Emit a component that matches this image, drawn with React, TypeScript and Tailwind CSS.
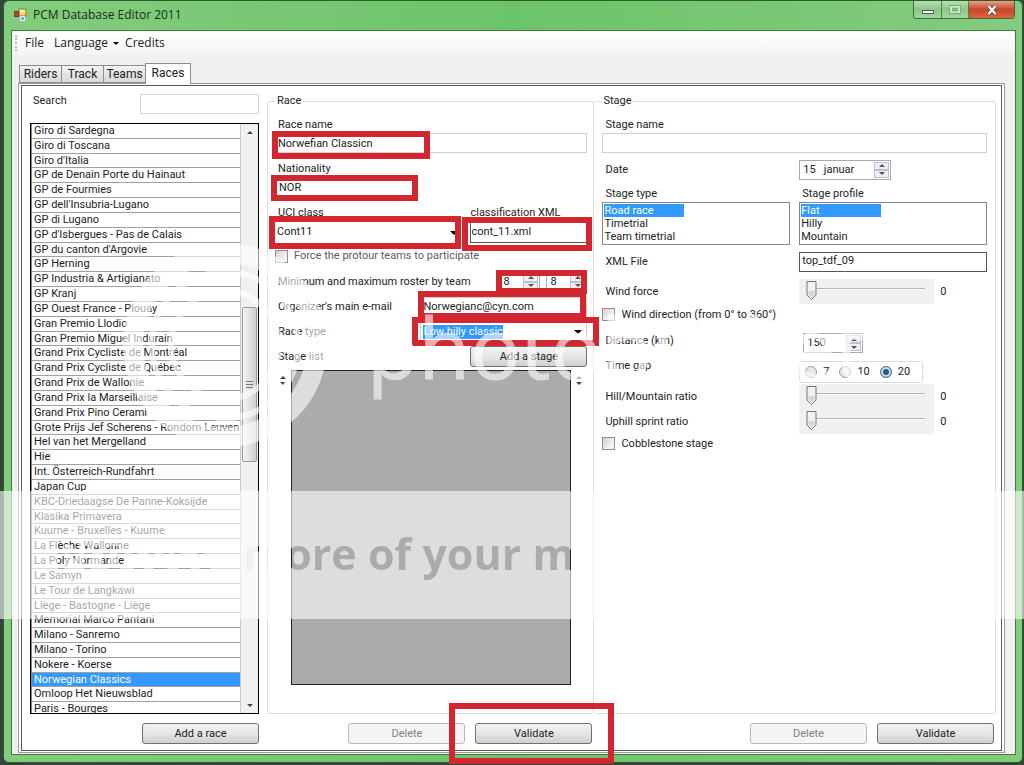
import { useState, type ReactNode } from "react";
import clsx from "clsx";

const races = [
  "Giro di Sardegna",
  "Giro di Toscana",
  "Giro d'Italia",
  "GP de Denain Porte du Hainaut",
  "GP de Fourmies",
  "GP dell'Insubria-Lugano",
  "GP di Lugano",
  "GP d'Isbergues - Pas de Calais",
  "GP du canton d'Argovie",
  "GP Herning",
  "GP Industria & Artigianato",
  "GP Kranj",
  "GP Ouest France - Plouay",
  "Gran Premio Llodio",
  "Gran Premio Miguel Indurain",
  "Grand Prix Cycliste de Montréal",
  "Grand Prix Cycliste de Québec",
  "Grand Prix de Wallonie",
  "Grand Prix la Marseillaise",
  "Grand Prix Pino Cerami",
  "Grote Prijs Jef Scherens - Rondom Leuven",
  "Hel van het Mergelland",
  "Hie",
  "Int. Österreich-Rundfahrt",
  "Japan Cup",
  "KBC-Driedaagse De Panne-Koksijde",
  "Klasika Primavera",
  "Kuurne - Bruxelles - Kuurne",
  "La Flèche Wallonne",
  "La Poly Normande",
  "Le Samyn",
  "Le Tour de Langkawi",
  "Liège - Bastogne - Liège",
  "Memorial Marco Pantani",
  "Milano - Sanremo",
  "Milano - Torino",
  "Nokere - Koerse",
  "Norwegian Classics",
  "Omloop Het Nieuwsblad",
  "Paris - Bourges",
];

// red highlight frame drawn over a field
function Mark({ className }: { className: string }) {
  return <span className={clsx("pointer-events-none absolute z-10 border-6 border-[#d22630]", className)} />;
}

function Arrow({ up = false, className }: { up?: boolean; className?: string }) {
  return (
    <svg viewBox="0 0 8 4" className={clsx("block", className ?? "h-[3px] w-[6px]")} aria-hidden="true">
      <path d={up ? "M0 4 4 0l4 4z" : "M0 0h8L4 4z"} fill="currentColor" />
    </svg>
  );
}

function WinButton({ children, disabled = false }: { children: ReactNode; disabled?: boolean }) {
  return (
    <button
      disabled={disabled}
      className={clsx(
        "h-[21px] w-[117px] rounded-[3px] border text-center",
        disabled
          ? "border-[#b9b9b9] bg-[#f4f4f4] text-[#838383]"
          : "border-[#707070] bg-linear-to-b from-[#f2f2f2] via-[#e6e6e6] to-[#cfcfcf] text-[#222]"
      )}
    >
      {children}
    </button>
  );
}

function Spinner({ label, value, className }: { label: string; value: string; className: string }) {
  return (
    <div className={clsx("flex h-5 border border-[#a9a9b0] bg-white p-px", className)}>
      <input aria-label={label} defaultValue={value} className="w-0 min-w-0 flex-1 pl-0.5 outline-none" />
      <div className="flex w-[15px] flex-col text-[#555]">
        <button aria-label={`${label} up`} className="flex flex-1 items-center justify-center border border-[#c0c0cc] bg-[#eeeef4]">
          <Arrow up />
        </button>
        <button aria-label={`${label} down`} className="flex flex-1 items-center justify-center border border-[#c0c0cc] bg-[#eeeef4]">
          <Arrow />
        </button>
      </div>
    </div>
  );
}

function Slider({ label }: { label: string }) {
  const [value, setValue] = useState(0);
  return (
    <div className="flex h-[25px] items-center gap-[6px]">
      <div className="relative h-[25px] w-[135px] bg-[#f0f0f0]">
        <svg className="block h-[25px] w-full" aria-hidden="true">
          <path d="M9 9.500H126" stroke="#b4b4b4" />
          <path d="M9 10.500H126" stroke="#fafafa" />
          <svg x={7 + value * 10}>
            <path d="M1 2.500h9V16l-4.500 4.500L1 16z" fill="#f1f1f1" stroke="#777" />
            <path d="M2.500 12h6v3.500l-3 3-3-3z" fill="#d6d6d6" />
          </svg>
        </svg>
        <input
          type="range"
          min={0}
          max={10}
          value={value}
          aria-label={label}
          onChange={(e) => setValue(Number(e.target.value))}
          className="absolute inset-0 h-full w-full opacity-0"
        />
      </div>
      <span>{value}</span>
    </div>
  );
}

function Check({ children, className }: { children: ReactNode; className?: string }) {
  return (
    <label className={clsx("flex items-center gap-[6px]", className)}>
      <input
        type="checkbox"
        className="h-[13px] w-[13px] appearance-none border border-[#8e8f8f] bg-linear-to-br from-[#d4d4d4] to-white checked:bg-[#3399ff]"
      />
      {children}
    </label>
  );
}

function ListBox({ label, items }: { label: string; items: string[] }) {
  const [selected, setSelected] = useState(0);
  return (
    <ul role="listbox" aria-label={label} className="h-[43px] border border-[#828790] p-px leading-[13px]">
      {items.map((item, i) => (
        <li
          key={item}
          role="option"
          aria-selected={i === selected}
          onClick={() => setSelected(i)}
          className={clsx("w-20 whitespace-nowrap", i === selected && "bg-[#3399ff] text-white")}
        >
          {item}
        </li>
      ))}
    </ul>
  );
}

function TitleBar() {
  return (
    <header className="flex h-[29px] shrink-0 items-start justify-between">
      <div className="flex h-[27px] items-center gap-[6px] pl-[3px]">
        <svg viewBox="0 0 13 13" className="h-[13px] w-[13px]" aria-hidden="true">
          <path d="M5 1h7v7H5z" fill="#f3d568" stroke="#8d7a35" />
          <path d="M6 2h5v2H6z" fill="#fff3b8" />
          <path d="M.500 3.500h4v5h-4z" fill="#c0432f" stroke="#6d3a30" />
          <path d="M6.500 8.500h4v4h-4z" fill="#7f9fd8" stroke="#eef" />
        </svg>
        <h1 className="text-[12px] text-[#173017]">PCM Database Editor 2011</h1>
      </div>
      <div className="mr-[1px] flex h-[18px] overflow-hidden rounded-b-[4px] border border-t-0 border-[#3d6b3d]">
        <button aria-label="Minimize" className="flex w-7 items-center justify-center border-r border-[#4f7f4f] bg-linear-to-b from-[#b9dfb5] via-[#8cc588] to-[#a2d79e]">
          <svg viewBox="0 0 12 12" className="h-3 w-3">
            <path d="M.500 6.500h11v3h-11z" fill="#fff" stroke="#555" />
          </svg>
        </button>
        <button aria-label="Maximize" className="flex w-[27px] items-center justify-center border-r border-[#4f7f4f] bg-linear-to-b from-[#b9dfb5] via-[#8cc588] to-[#a2d79e]">
          <svg viewBox="0 0 12 12" className="h-3 w-3" fill="none">
            <path d="M2 2.500h8v6H2z" stroke="#c9ecc6" strokeWidth="2" />
            <path d="M.500 1.500h11v8H.500zM3.500 4.500h5v2h-5z" stroke="#7cab79" />
          </svg>
        </button>
        <button aria-label="Close" className="flex w-[45px] items-center justify-center bg-linear-to-b from-[#e2a08c] via-[#c8452a] to-[#d9673f]">
          <svg viewBox="0 0 12 12" className="h-3 w-3" fill="none">
            <path d="m2.500 2 7 8m0-8-7 8" stroke="#6b3026" strokeWidth="4" />
            <path d="m2.500 2 7 8m0-8-7 8" stroke="#fff" strokeWidth="2.500" />
          </svg>
        </button>
      </div>
    </header>
  );
}

function RaceList() {
  const [selected, setSelected] = useState("Norwegian Classics");
  return (
    <section className="flex w-[229px] shrink-0 flex-col">
      <div className="flex h-[30px] items-start justify-between pl-[3px]">
        <label htmlFor="search" className="leading-4">Search</label>
        <input id="search" className="mt-px h-5 w-[119px] border border-[#d5d5d9] px-1 outline-none" />
      </div>
      <div className="flex min-h-0 flex-1 overflow-hidden border border-black">
        <ul role="listbox" aria-label="Races" className="-mb-1 flex min-w-0 flex-1 flex-col border-l border-[#888]">
          {races.map((race) => (
            <li
              key={race}
              role="option"
              aria-selected={race === selected}
              onClick={() => setSelected(race)}
              className={clsx(
                "flex-1 overflow-hidden border-b border-[#a0a0a0] pl-[2px] leading-[13px] whitespace-nowrap",
                race === selected && "bg-[#3399ff] text-white"
              )}
            >
              {race}
            </li>
          ))}
        </ul>
        <div className="flex w-[18px] shrink-0 flex-col items-center border-l border-[#c8c8c8] bg-[#f0f0f0] text-[#444]">
          <div className="flex h-4 items-center">
            <Arrow up />
          </div>
          <div className="flex-[168]" />
          <div className="flex h-[155px] w-[15px] flex-col items-center justify-center gap-[2px] rounded-[2px] border border-[#999] bg-linear-to-r from-[#f5f5f5] to-[#cfcfcf]">
            <span className="h-px w-[7px] bg-[#777]" />
            <span className="h-px w-[7px] bg-[#777]" />
            <span className="h-px w-[7px] bg-[#777]" />
          </div>
          <div className="flex-[236]" />
          <div className="flex h-4 items-center">
            <Arrow />
          </div>
        </div>
      </div>
      <div className="mt-[9px] mb-[6px] flex justify-end">
        <WinButton>Add a race</WinButton>
      </div>
    </section>
  );
}

function StageOrder({ label }: { label: string }) {
  return (
    <div className="flex w-4 flex-col items-center gap-[3px] pt-[6px] text-[#444]">
      <button aria-label={`${label} up`}>
        <Arrow up />
      </button>
      <button aria-label={`${label} down`}>
        <Arrow />
      </button>
    </div>
  );
}

function RacePanel() {
  return (
    <section className="flex flex-[327] flex-col">
      <fieldset className="flex flex-1 flex-col rounded-[3px] border border-[#dcdcdc] pr-[6px] pl-[7px]">
        <legend className="px-[2px] leading-4">Race</legend>
        <div className="flex flex-1 flex-col pt-2">
          <label htmlFor="race-name" className="pl-[3px] leading-4">Race name</label>
          <div className="relative mb-2 h-5">
            <input id="race-name" defaultValue="Norwefian Classicn" className="h-5 w-full border border-[#cfcfd4] px-[2px] outline-none" />
            <Mark className="-top-[2px] -left-[3px] h-7 w-[158px]" />
          </div>

          <label htmlFor="nationality" className="pl-[3px] leading-4">Nationality</label>
          <div className="relative mb-2 h-5 w-[138px]">
            <input id="nationality" defaultValue="NOR" className="h-5 w-full border border-[#cfcfd4] px-[3px] outline-none" />
            <Mark className="-top-[2px] -left-[4px] h-[26px] w-[147px]" />
          </div>

          <div className="flex justify-between">
            <div className="w-[183px]">
              <label htmlFor="uci" className="block pl-[3px] leading-4">UCI class</label>
              <div className="relative h-[22px]">
                <select id="uci" className="h-[22px] w-full appearance-none px-[2px] outline-none">
                  <option>Cont11</option>
                </select>
                <Arrow className="pointer-events-none absolute top-[10px] right-0 h-1 w-2 text-black" />
                <Mark className="-top-[5px] -left-[6px] h-[33px] w-[192px]" />
              </div>
            </div>
            <div className="w-[117px]">
              <label htmlFor="class-xml" className="block leading-4">classification XML</label>
              <div className="relative h-[22px]">
                <input id="class-xml" defaultValue="cont_11.xml" className="h-[22px] w-full border border-[#555] pb-[2px] outline-none" />
                <Mark className="-top-[4px] -left-[8px] h-[34px] w-[130px]" />
              </div>
            </div>
          </div>

          <Check className="h-[26px] text-[#5c5c5c]">Force the protour teams to participate</Check>

          <div className="flex h-[25px] items-center justify-between pl-[3px]">
            <span>Minimum and maximum roster by team</span>
            <div className="relative flex gap-[6px]">
              <Spinner label="Minimum roster" value="8" className="w-[41px]" />
              <Spinner label="Maximum roster" value="8" className="w-[41px]" />
              <Mark className="-top-[2px] -left-[3px] h-6 w-[91px]" />
            </div>
          </div>

          <div className="flex h-[25px] items-center justify-between pl-[3px]">
            <label htmlFor="email">Organizer's main e-mail</label>
            <div className="relative h-5 w-[167px]">
              <input id="email" defaultValue="Norwegianc@cyn.com" className="h-5 w-full border border-[#cfcfd4] px-[2px] outline-none" />
              <Mark className="-top-[6px] -left-[2px] h-7 w-[168px]" />
            </div>
          </div>

          <div className="flex h-[25px] items-center justify-between pl-[3px]">
            <label htmlFor="race-type">Race type</label>
            <div className="relative flex h-[22px] w-[167px] items-center justify-between border border-[#cfcfd4] px-[2px]">
              <select id="race-type" className="h-[14px] appearance-none bg-[#3399ff] leading-[14px] text-white outline-none">
                <option>Low hilly classic</option>
              </select>
              <Arrow className="mr-[2px] h-1 w-2 text-black" />
              <Mark className="-top-[5px] -left-[9px] h-[29px] w-[187px]" />
            </div>
          </div>

          <div className="flex h-[25px] items-center justify-between pl-[3px]">
            <span>Stage list</span>
            <WinButton>Add a stage</WinButton>
          </div>

          <div className="mt-px mb-7 flex flex-1">
            <StageOrder label="First stage" />
            <div className="flex-1 border border-[#222] bg-[#ababab]" />
            <StageOrder label="Last stage" />
          </div>
        </div>
      </fieldset>
      <div className="mt-[9px] mr-[2px] mb-[6px] flex justify-end gap-[10px]">
        <WinButton disabled>Delete</WinButton>
        <div className="relative">
          <WinButton>Validate</WinButton>
          <Mark className="-top-[20px] -left-[26px] h-[61px] w-[165px]" />
        </div>
      </div>
    </section>
  );
}

function StagePanel() {
  const [gap, setGap] = useState("20");
  return (
    <section className="flex flex-[401] flex-col">
      <fieldset className="flex-1 rounded-[3px] border border-l-0 border-[#dcdcdc] pr-2 pl-2">
        <legend className="px-px leading-4">Stage</legend>
        <div className="pt-2">
          <label htmlFor="stage-name" className="block pl-[3px] leading-4">Stage name</label>
          <input id="stage-name" className="block h-5 w-full border border-[#cfcfd4] px-1 outline-none" />

          <div className="grid h-[33px] grid-cols-2 items-center gap-x-[9px]">
            <span className="pl-[3px]">Date</span>
            <Spinner label="Date" value="15   januar" className="w-[92px]" />
          </div>

          <div className="grid grid-cols-2 gap-x-[9px]">
            <span className="pl-[3px] leading-4">Stage type</span>
            <span className="pl-[3px] leading-4">Stage profile</span>
            <ListBox label="Stage type" items={["Road race", "Timetrial", "Team timetrial"]} />
            <ListBox label="Stage profile" items={["Flat", "Hilly", "Mountain"]} />
          </div>

          <div className="grid h-[33px] grid-cols-2 items-center gap-x-[9px]">
            <label htmlFor="xml-file" className="pl-[3px]">XML File</label>
            <input id="xml-file" defaultValue="top_tdf_09" className="h-5 w-full border border-[#555] px-[2px] pb-[3px] outline-none" />
          </div>

          <div className="grid h-[27px] grid-cols-2 items-center gap-x-[9px]">
            <span className="pl-[3px]">Wind force</span>
            <Slider label="Wind force" />
          </div>

          <Check className="h-[19px]">Wind direction (from 0° to 360°)</Check>

          <div className="grid h-[34px] grid-cols-2 items-center gap-x-[9px]">
            <span className="pl-[3px]">Distance (km)</span>
            <div className="pt-1 pl-1">
              <Spinner label="Distance (km)" value="150" className="w-[60px]" />
            </div>
          </div>

          <div className="grid h-[26px] grid-cols-2 gap-x-[9px]">
            <span className="pl-[3px] leading-4">Time gap</span>
            <div className="mt-[3px] flex h-[22px] w-[124px] items-center gap-[10px] rounded-[3px] border border-[#dcdcdc] pl-[5px]">
              {["7", "10", "20"].map((g) => (
                <label key={g} className="flex items-center gap-[6px]">
                  <input
                    type="radio"
                    name="gap"
                    checked={gap === g}
                    onChange={() => setGap(g)}
                    className="h-3 w-3 appearance-none rounded-full border border-[#9a9a9a] bg-[#e6e6e6] checked:border-[#54809b] checked:bg-[#1f5f86] checked:shadow-[inset_0_0_0_2px_#cfe2ee]"
                  />
                  {g}
                </label>
              ))}
            </div>
          </div>

          <div className="grid h-[25px] grid-cols-2 items-center gap-x-[9px]">
            <span className="pl-[3px]">Hill/Mountain ratio</span>
            <Slider label="Hill/Mountain ratio" />
          </div>
          <div className="grid h-[25px] grid-cols-2 items-center gap-x-[9px]">
            <span className="pl-[3px]">Uphill sprint ratio</span>
            <Slider label="Uphill sprint ratio" />
          </div>

          <Check className="h-[19px]">Cobblestone stage</Check>
        </div>
      </fieldset>
      <div className="mt-[9px] mr-[2px] mb-[6px] flex justify-end gap-[10px]">
        <WinButton disabled>Delete</WinButton>
        <WinButton>Validate</WinButton>
      </div>
    </section>
  );
}

// translucent logo and banner; the banner lettering is cut out of the white band
function Watermark() {
  return (
    <svg className="pointer-events-none absolute inset-0 z-20 h-full w-full font-['Open_Sans',sans-serif]" aria-hidden="true">
      <defs>
        <mask id="banner">
          <rect width="100%" height="100%" fill="#fff" />
          <g fill="#000" fontSize="43" fontWeight="700">
            <text x="54" y="570">Protect</text>
            <text x="243" y="570">more of your m</text>
          </g>
        </mask>
      </defs>
      <g fill="none" stroke="#fff" opacity="0.6">
        <circle cx="225" cy="345" r="92" strokeWidth="20" />
        <circle cx="225" cy="345" r="73" strokeWidth="6" />
        <circle cx="225" cy="345" r="54" strokeWidth="6" />
      </g>
      <text x="367" y="379" fontSize="84" fill="#fff" stroke="#fff" opacity="0.6">photobucket</text>
      <rect y="491" width="100%" height="128" fill="#fff" opacity="0.6" mask="url(#banner)" />
    </svg>
  );
}

export default function App() {
  return (
    <div className="relative flex min-h-screen w-full flex-col overflow-hidden bg-[#33443a] pr-px pb-[2px] pl-[3px] font-['Roboto','Liberation_Sans',sans-serif] text-[11px] leading-4 text-[#222]">
      <div className="flex flex-1 flex-col rounded-[6px] border border-[#2c5c2c] bg-[#74c470] bg-linear-to-r from-[#84cc7f] via-[#6cc468] to-[#84cc7f] pr-[6px] pb-[7px] pl-[7px]">
        <div className="font-['Open_Sans',sans-serif]">
          <TitleBar />
        </div>

        <main className="flex flex-1 flex-col border border-[#3f7a3f] bg-[#f0f0f0]">
          <nav className="flex h-6 items-center bg-linear-to-b from-white to-[#f3f3f3] pl-[3px] font-['Open_Sans',sans-serif] text-[12px]">
            <span className="h-4 border-l-2 border-dotted border-[#bbb]" />
            <button className="ml-2">File</button>
            <button className="ml-[10px] flex items-center gap-[5px]">
              Language
              <Arrow className="h-[3px] w-[6px] text-black" />
            </button>
            <button className="ml-[6px]">Credits</button>
          </nav>

          <div className="flex flex-1 flex-col pt-2 pr-[10px] pb-px pl-[6px]">
            <div role="tablist" className="z-10 -mb-px flex items-end pl-px text-[12px]">
              {["Riders", "Track", "Teams"].map((tab) => (
                <button key={tab} role="tab" className="mb-px h-[18px] w-[42px] border border-r-0 border-[#8c8c8c] bg-linear-to-b from-[#f3f3f3] to-[#d8d8d8]">
                  {tab}
                </button>
              ))}
              <button role="tab" aria-selected="true" className="h-[21px] w-[46px] border border-b-0 border-[#8c8c8c] bg-white pb-[2px]">
                Races
              </button>
            </div>

            <div className="flex flex-1 border border-[#999] bg-white px-[2px] pt-px pb-px">
              <div className="flex flex-1 border border-[#5a5a5a] bg-white pt-[7px] pr-[5px] pl-2">
                <RaceList />
                <div className="ml-2 flex flex-1">
                  <RacePanel />
                  <StagePanel />
                </div>
              </div>
            </div>
          </div>
        </main>
      </div>
      <Watermark />
    </div>
  );
}
